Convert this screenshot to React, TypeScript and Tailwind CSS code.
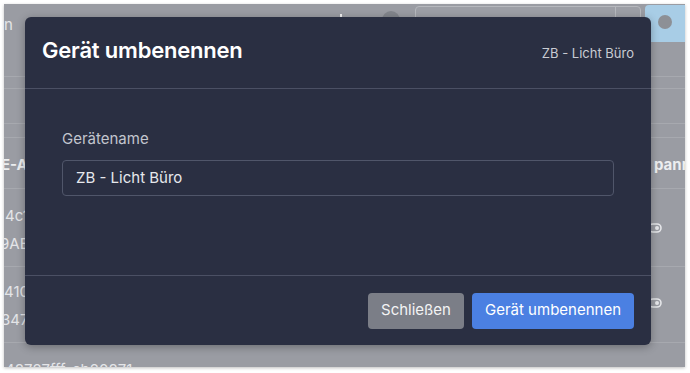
import React from "react"

function ToggleIcon() {
  return (
    <svg width="14" height="10" viewBox="0 0 14 10" fill="none">
      <rect x="1" y="1" width="12" height="8" rx="4" stroke="#e6e7ea" strokeWidth="1.6" />
      <circle cx="9" cy="5" r="2" fill="#e6e7ea" />
    </svg>
  )
}

export default function App() {
  return (
    <div
      className="w-[690px] h-[373px] bg-white overflow-hidden"
      style={{ fontFamily: "Inter, 'Noto Sans', sans-serif" }}
    >
      <div className="ml-[4px] mt-[4px] w-[681px] h-[363px] bg-[#9a9ca3] relative overflow-hidden shadow-[0_1px_3px_rgba(0,0,0,0.25)]">
        {/* dimmed page behind the dialog */}
        <div className="flex flex-col text-[15px] text-[#e4e5e8]">
          <div className="h-[73px] border-b border-[#a7a9af] flex items-start relative">
            <span className="ml-[0px] mt-[10px] leading-[22px]">n</span>
            <div className="ml-[327px] mt-[10px] w-[2px] h-[4px] bg-[#f0f0f0]" />
            <div className="ml-[40px] mt-[7px] w-[18px] h-[18px] rounded-full bg-[#82858c]" />
            <div className="ml-[15px] mt-[2px] w-[229px] h-[34px] rounded-[4px] border border-[#b6b8bd] bg-[#9d9fa6] flex justify-end">
              <div className="w-[25px] h-full border-l border-[#b6b8bd]" />
            </div>
            <div className="ml-[4px] mt-[1px] w-[41px] h-[37px] rounded-l-[4px] bg-[#a8cde6] flex items-start justify-center pt-[10px]">
              <div className="w-[14px] h-[14px] rounded-full bg-[#8d9096]" />
            </div>
          </div>
          <div className="h-[12px] border-b border-[#a7a9af]" />
          <div className="h-[35px] border-b border-[#a7a9af]" />
          <div className="h-[14px] border-b border-[#a7a9af]" />
          <div className="h-[51px] border-b border-[#a7a9af] flex items-center justify-between font-bold text-[#eceef0] pt-[4px]">
            <span className="-ml-[3px]">E-A</span>
            <span className="-mr-[6px]">pann</span>
          </div>
          <div className="h-[78px] border-b border-[#a7a9af] flex justify-between pt-[13px] leading-[28px]">
            <div className="flex flex-col">
              <span className="ml-[1px]">4c1</span>
              <span className="-ml-[4px]">9AE</span>
            </div>
            <div className="mr-[23px] mt-[21px]">
              <ToggleIcon />
            </div>
          </div>
          <div className="h-[76px] border-b border-[#a7a9af] flex justify-between pt-[11px] leading-[28px]">
            <div className="flex flex-col">
              <span className="ml-[0px]">410</span>
              <span className="-ml-[3px]">347</span>
            </div>
            <div className="mr-[23px] mt-[20px]">
              <ToggleIcon />
            </div>
          </div>
          <div className="pt-[13px] leading-[28px]">
            <span className="ml-[1px]">48727fff-cb20871</span>
          </div>
        </div>

        {/* dialog */}
        <div className="absolute left-[21px] top-[13px] w-[626px] h-[328px] rounded-[6px] bg-[#2a2f42] flex flex-col shadow-[0_2px_8px_rgba(0,0,0,0.3)]">
          <div className="h-[72px] border-b border-[#4b5064] flex items-baseline justify-between px-[17px] pt-[19px]">
            <h2 className="text-[22px] leading-[28px] font-semibold text-white tracking-[-0.2px]">
              Gerät umbenennen
            </h2>
            <span className="text-[13px] text-[#c9ccd3]">ZB - Licht Büro</span>
          </div>
          <div className="h-[187px] border-b border-[#4b5064] px-[37px] pt-[39px]">
            <label className="block text-[15px] leading-[22px] text-[#c3c6ce] mb-[10px]">Gerätename</label>
            <div className="h-[36px] rounded-[4px] border border-[#50566a] flex items-center px-[13px] text-[15px] text-[#e6e8ec]">
              ZB - Licht Büro
            </div>
          </div>
          <div className="flex-1 flex items-center justify-end gap-[8px] pr-[17px]">
            <button className="w-[96px] h-[36px] rounded-[4px] bg-[#7b7e87] text-[15px] text-[#f3f3f4]">
              Schließen
            </button>
            <button className="w-[162px] h-[36px] rounded-[4px] bg-[#4b80e2] text-[15px] text-white">
              Gerät umbenennen
            </button>
          </div>
        </div>
      </div>
    </div>
  )
}
